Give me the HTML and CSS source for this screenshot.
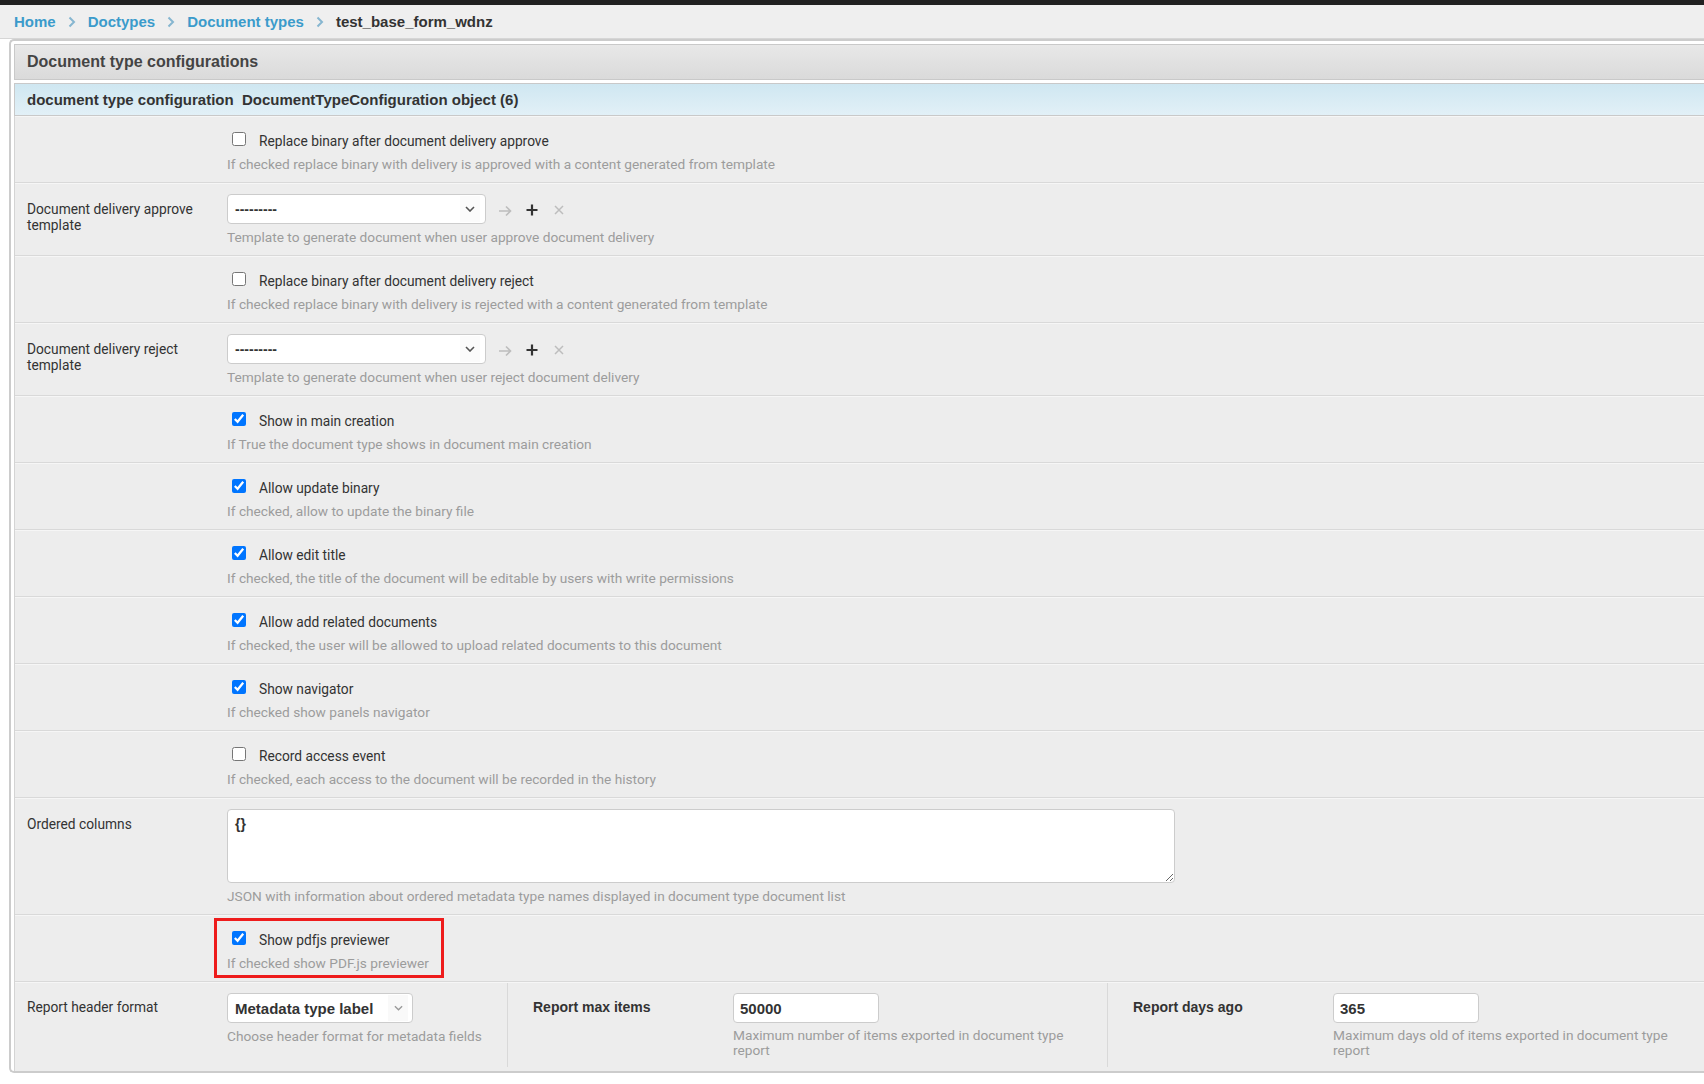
FILE: index.html
```html
<!DOCTYPE html>
<html lang="en">
<head>
<meta charset="utf-8">
<title>test_base_form_wdnz</title>
<link rel="stylesheet" href="styles.css">
</head>
<body>
<div class="topbar"></div>
<nav class="breadcrumbs">
  <a href="#">Home</a>
  <svg class="sep" viewBox="0 0 8 12" width="8" height="12"><polyline points="1.5,1.5 6,6 1.5,10.5" fill="none" stroke="#86b6d0" stroke-width="2"/></svg>
  <a href="#">Doctypes</a>
  <svg class="sep" viewBox="0 0 8 12" width="8" height="12"><polyline points="1.5,1.5 6,6 1.5,10.5" fill="none" stroke="#86b6d0" stroke-width="2"/></svg>
  <a href="#">Document types</a>
  <svg class="sep" viewBox="0 0 8 12" width="8" height="12"><polyline points="1.5,1.5 6,6 1.5,10.5" fill="none" stroke="#86b6d0" stroke-width="2"/></svg>
  <span class="current">test_base_form_wdnz</span>
</nav>

<div class="module">
  <h2 class="module-title">Document type configurations</h2>
  <h3 class="inline-title">document type configuration&nbsp; DocumentTypeConfiguration object (6)</h3>

  <div class="rows">
    <div class="row">
      <div class="label"></div>
      <div class="field">
        <div class="check"><input type="checkbox"><span>Replace binary after document delivery approve</span></div>
        <div class="help">If checked replace binary with delivery is approved with a content generated from template</div>
      </div>
    </div>

    <div class="row sel">
      <div class="label">Document delivery approve template</div>
      <div class="field">
        <div class="line">
          <div class="select"><span class="txt">---------</span><span class="caret"><svg viewBox="0 0 10 6" width="10" height="6"><polyline points="1,1 5,5 9,1" fill="none" stroke="#555" stroke-width="1.6"/></svg></span></div>
          <svg class="ic-arrow" viewBox="0 0 14 12" width="14" height="12"><path d="M1 6 H12.5 M8 1.5 L12.5 6 L8 10.5" fill="none" stroke="#bdbdbd" stroke-width="1.6"/></svg>
          <svg class="ic-plus" viewBox="0 0 12 12" width="12" height="12"><path d="M6 0.5 V11.5 M0.5 6 H11.5" fill="none" stroke="#333" stroke-width="2.2"/></svg>
          <svg class="ic-x" viewBox="0 0 10 10" width="10" height="10"><path d="M1 1 L9 9 M9 1 L1 9" fill="none" stroke="#bdbdbd" stroke-width="1.5"/></svg>
        </div>
        <div class="help">Template to generate document when user approve document delivery</div>
      </div>
    </div>

    <div class="row">
      <div class="label"></div>
      <div class="field">
        <div class="check"><input type="checkbox"><span>Replace binary after document delivery reject</span></div>
        <div class="help">If checked replace binary with delivery is rejected with a content generated from template</div>
      </div>
    </div>

    <div class="row sel">
      <div class="label">Document delivery reject template</div>
      <div class="field">
        <div class="line">
          <div class="select"><span class="txt">---------</span><span class="caret"><svg viewBox="0 0 10 6" width="10" height="6"><polyline points="1,1 5,5 9,1" fill="none" stroke="#555" stroke-width="1.6"/></svg></span></div>
          <svg class="ic-arrow" viewBox="0 0 14 12" width="14" height="12"><path d="M1 6 H12.5 M8 1.5 L12.5 6 L8 10.5" fill="none" stroke="#bdbdbd" stroke-width="1.6"/></svg>
          <svg class="ic-plus" viewBox="0 0 12 12" width="12" height="12"><path d="M6 0.5 V11.5 M0.5 6 H11.5" fill="none" stroke="#333" stroke-width="2.2"/></svg>
          <svg class="ic-x" viewBox="0 0 10 10" width="10" height="10"><path d="M1 1 L9 9 M9 1 L1 9" fill="none" stroke="#bdbdbd" stroke-width="1.5"/></svg>
        </div>
        <div class="help">Template to generate document when user reject document delivery</div>
      </div>
    </div>

    <div class="row">
      <div class="label"></div>
      <div class="field">
        <div class="check"><input type="checkbox" checked><span>Show in main creation</span></div>
        <div class="help">If True the document type shows in document main creation</div>
      </div>
    </div>

    <div class="row">
      <div class="label"></div>
      <div class="field">
        <div class="check"><input type="checkbox" checked><span>Allow update binary</span></div>
        <div class="help">If checked, allow to update the binary file</div>
      </div>
    </div>

    <div class="row">
      <div class="label"></div>
      <div class="field">
        <div class="check"><input type="checkbox" checked><span>Allow edit title</span></div>
        <div class="help">If checked, the title of the document will be editable by users with write permissions</div>
      </div>
    </div>

    <div class="row">
      <div class="label"></div>
      <div class="field">
        <div class="check"><input type="checkbox" checked><span>Allow add related documents</span></div>
        <div class="help">If checked, the user will be allowed to upload related documents to this document</div>
      </div>
    </div>

    <div class="row">
      <div class="label"></div>
      <div class="field">
        <div class="check"><input type="checkbox" checked><span>Show navigator</span></div>
        <div class="help">If checked show panels navigator</div>
      </div>
    </div>

    <div class="row">
      <div class="label"></div>
      <div class="field">
        <div class="check"><input type="checkbox"><span>Record access event</span></div>
        <div class="help">If checked, each access to the document will be recorded in the history</div>
      </div>
    </div>

    <div class="row sel">
      <div class="label">Ordered columns</div>
      <div class="field">
        <textarea class="area">{}</textarea>
        <div class="help">JSON with information about ordered metadata type names displayed in document type document list</div>
      </div>
    </div>

    <div class="row">
      <div class="label"></div>
      <div class="field">
        <div class="hl">
          <div class="check"><input type="checkbox" checked><span>Show pdfjs previewer</span></div>
          <div class="help">If checked show PDF.js previewer</div>
        </div>
      </div>
    </div>

    <div class="row report">
      <div class="col c1">
        <div class="label">Report header format</div>
        <div class="fbox">
          <div class="select small"><span class="txt">Metadata type label</span><span class="caret"><svg viewBox="0 0 10 6" width="9" height="6"><polyline points="1,1 5,5 9,1" fill="none" stroke="#9a9a9a" stroke-width="1.5"/></svg></span></div>
          <div class="help">Choose header format for metadata fields</div>
        </div>
      </div>
      <div class="col c2">
        <div class="label req">Report max items</div>
        <div class="fbox">
          <input class="num" type="text" value="50000">
          <div class="help wrap">Maximum number of items exported in document type report</div>
        </div>
      </div>
      <div class="col c3">
        <div class="label req">Report days ago</div>
        <div class="fbox">
          <input class="num" type="text" value="365">
          <div class="help wrap">Maximum days old of items exported in document type report</div>
        </div>
      </div>
    </div>
  </div>
</div>
</body>
</html>
```

FILE: styles.css
```css
html, body {
  margin: 0;
  padding: 0;
}

body {
  background: #ffffff;
  font-family: "Liberation Sans", Arial, sans-serif;
  font-size: 14px;
  color: #333333;
  overflow: hidden;
}

.topbar {
  height: 5px;
  background: #212121;
}

.breadcrumbs {
  height: 33px;
  background: #efefef;
  border-bottom: 1px solid #d6d6d6;
  display: flex;
  align-items: center;
  padding-left: 14px;
  font-size: 15px;
  font-weight: bold;
  line-height: 17px;
}

.breadcrumbs a {
  color: #3b9bcb;
  text-decoration: none;
}

.breadcrumbs .sep {
  margin: 0 12px 0 12px;
  flex: none;
}

.breadcrumbs .current {
  color: #333333;
}

.module {
  margin-left: 9px;
  border: 2px solid #cccccc;
  border-right: 0;
  border-radius: 5px 0 0 5px;
  padding: 3px 0 0 3px;
  background: #ffffff;
}

.module-title {
  margin: 0;
  height: 34px;
  line-height: 34px;
  padding-left: 12px;
  border: 1px solid #c9c9c9;
  border-right: 0;
  background: linear-gradient(#e8e8e8, #dadada);
  font-size: 16px;
  font-weight: bold;
  color: #444444;
}

.inline-title {
  margin: 3px 0 0 0;
  height: 31px;
  line-height: 31px;
  padding-left: 12px;
  border: 1px solid #c9c9c9;
  border-right: 0;
  background: linear-gradient(#cfe7f1, #e2f0f7);
  font-size: 15px;
  font-weight: bold;
  color: #333333;
  white-space: pre;
}

.rows {
  border-left: 1px solid #d4d4d4;
}

.row {
  display: flex;
  background: #ededed;
  border-top: 1px solid #f6f6f6;
  border-bottom: 1px solid #d9d9d9;
  padding-left: 12px;
}

.row .label {
  width: 200px;
  flex: none;
  box-sizing: border-box;
  padding-right: 20px;
  padding-top: 6px;
  line-height: 16px;
  color: #333333;
  font-family: Roboto, "Liberation Sans", Arial, sans-serif;
  font-size: 13.75px;
}

.row .label.req {
  font-family: "Liberation Sans", Arial, sans-serif;
  font-size: 14px;
  font-weight: bold;
}

.row.sel .label {
  padding-top: 17px;
}

.field {
  padding-top: 15px;
  padding-bottom: 10px;
}

.row.sel .field {
  padding-top: 10px;
}

.check {
  display: flex;
  align-items: flex-start;
  height: 20px;
  line-height: 18px;
  white-space: nowrap;
  font-family: Roboto, "Liberation Sans", Arial, sans-serif;
  font-size: 13.75px;
}

.check input {
  width: 14px;
  height: 14px;
  margin: 0 13px 0 5px;
  flex: none;
}

.help {
  color: #9c9c9c;
  font-family: Roboto, "Liberation Sans", Arial, sans-serif;
  font-size: 13.7px;
  line-height: 16px;
  margin-top: 4px;
}

.row.sel .help {
  margin-top: 5px;
}

.line {
  display: flex;
  align-items: center;
}

.select {
  width: 259px;
  height: 30px;
  box-sizing: border-box;
  border: 1px solid #cccccc;
  border-radius: 4px;
  background: #ffffff;
  display: flex;
  align-items: center;
  padding-left: 7px;
  font-weight: bold;
  color: #333333;
}

.select .txt {
  flex: 1;
}

.select .caret {
  width: 20px;
  height: 26px;
  margin-right: 5px;
  display: flex;
  align-items: center;
  justify-content: center;
  background: #fbfbfb;
}

.select.small {
  width: 186px;
  font-size: 15px;
}

.select.small .caret {
  margin-right: 4px;
  background: #f9f9f9;
}

.ic-arrow {
  margin-left: 12px;
  margin-top: 3px;
  flex: none;
}

.ic-plus {
  margin-left: 14px;
  margin-top: 2px;
  flex: none;
}

.ic-x {
  margin-left: 16px;
  margin-top: 2px;
  flex: none;
}

.area {
  display: block;
  width: 948px;
  height: 74px;
  box-sizing: border-box;
  border: 1px solid #cccccc;
  border-radius: 4px;
  background: #ffffff;
  padding: 5px 7px;
  margin: 0;
  font-family: "Liberation Sans", Arial, sans-serif;
  font-size: 14px;
  font-weight: bold;
  line-height: 18px;
  color: #333333;
  resize: both;
}

.hl {
  display: inline-block;
  border: 3px solid #ee1c1c;
  padding: 10px 12px 4px 10px;
  margin: -13px 0 -7px -13px;
}

.row.report {
  padding-bottom: 4px;
  border-bottom: 0;
}

.col {
  display: flex;
  padding-top: 10px;
  padding-bottom: 9px;
  box-sizing: border-box;
}

.col .label {
  padding-top: 6px;
}

.c1 {
  width: 480px;
  flex: none;
}

.c2 {
  width: 600px;
  flex: none;
  border-left: 1px solid #d9d9d9;
  padding-left: 25px;
}

.c3 {
  flex: 1;
  border-left: 1px solid #d9d9d9;
  padding-left: 25px;
}

.fbox .help {
  margin-top: 5px;
}

.fbox .help.wrap {
  max-width: 345px;
  line-height: 15px;
}

.num {
  display: block;
  width: 146px;
  height: 30px;
  box-sizing: border-box;
  border: 1px solid #cccccc;
  border-radius: 4px;
  background: #ffffff;
  padding: 0 6px;
  margin: 0;
  font-family: "Liberation Sans", Arial, sans-serif;
  font-size: 15px;
  font-weight: bold;
  color: #333333;
}
```
